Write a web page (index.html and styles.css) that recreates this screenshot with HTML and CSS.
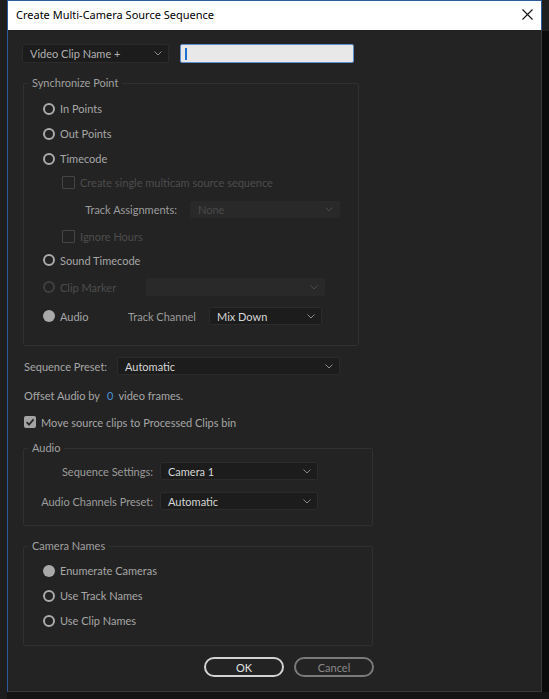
FILE: index.html
```html
<!DOCTYPE html>
<html>
<head>
<meta charset="utf-8">
<link rel="stylesheet" href="styles.css">
</head>
<body>
<div class="screen">
  <div class="left-strip"></div>
  <div class="dialog">
    <div class="titlebar">
      <span class="title">Create Multi-Camera Source Sequence</span>
      <svg class="close" width="11" height="11" viewBox="0 0 11 11"><path d="M0.5 0.5 L10.5 10.5 M10.5 0.5 L0.5 10.5" stroke="#111" stroke-width="1.1" fill="none"/></svg>
    </div>
    <div class="body">
      <div class="top-row">
        <div class="select name-select"><span class="val">Video Clip Name +</span><svg class="chev" width="8" height="5" viewBox="0 0 8 5"><path d="M0.5 0.5 L4 4 L7.5 0.5" stroke="#8a8a8a" fill="none"/></svg></div>
        <div class="text-input"><span class="caret"></span></div>
      </div>

      <fieldset class="group sync">
        <legend>Synchronize Point</legend>
        <div class="options">
          <div class="row h25"><span class="radio"></span><span class="lbl">In Points</span></div>
          <div class="row h25"><span class="radio"></span><span class="lbl">Out Points</span></div>
          <div class="row h25"><span class="radio"></span><span class="lbl">Timecode</span></div>
          <div class="row h23 indent"><span class="check disabled"></span><span class="lbl dim">Create single multicam source sequence</span></div>
          <div class="row h30">
            <span class="lbl assign-lbl">Track Assignments:</span>
            <div class="select disabled-select assign-select"><span class="val dim">None</span><svg class="chev" width="8" height="5" viewBox="0 0 8 5"><path d="M0.5 0.5 L4 4 L7.5 0.5" stroke="#4a4a4a" fill="none"/></svg></div>
          </div>
          <div class="row h24 indent"><span class="check disabled"></span><span class="lbl dim">Ignore Hours</span></div>
          <div class="row h24"><span class="radio"></span><span class="lbl">Sound Timecode</span></div>
          <div class="row h30">
            <span class="radio disabled"></span><span class="lbl dim marker-lbl">Clip Marker</span>
            <div class="select disabled-select marker-select"><span class="val"></span><svg class="chev" width="8" height="5" viewBox="0 0 8 5"><path d="M0.5 0.5 L4 4 L7.5 0.5" stroke="#4a4a4a" fill="none"/></svg></div>
          </div>
          <div class="row h28">
            <span class="radio filled"></span><span class="lbl audio-lbl">Audio</span>
            <span class="lbl channel-lbl">Track Channel</span>
            <div class="select channel-select"><span class="val bright">Mix Down</span><svg class="chev" width="8" height="5" viewBox="0 0 8 5"><path d="M0.5 0.5 L4 4 L7.5 0.5" stroke="#8a8a8a" fill="none"/></svg></div>
          </div>
        </div>
      </fieldset>

      <div class="line preset-row">
        <span class="lbl preset-lbl">Sequence Preset:</span>
        <div class="select preset-select"><span class="val bright">Automatic</span><svg class="chev" width="8" height="5" viewBox="0 0 8 5"><path d="M0.5 0.5 L4 4 L7.5 0.5" stroke="#8a8a8a" fill="none"/></svg></div>
      </div>

      <div class="line offset-row">
        <span class="lbl">Offset Audio by</span><span class="num">0</span><span class="lbl">video frames.</span>
      </div>

      <div class="line move-row">
        <span class="check checked"><svg width="12" height="12" viewBox="0 0 12 12"><path d="M2.6 6.2 L5 8.6 L9.6 3.4" stroke="#2a2a2a" stroke-width="1.8" fill="none"/></svg></span>
        <span class="lbl">Move source clips to Processed Clips bin</span>
      </div>

      <fieldset class="group wide audio-group">
        <legend>Audio</legend>
        <div class="settings">
          <div class="setting">
            <span class="lbl set-lbl">Sequence Settings:</span>
            <div class="select set-select"><span class="val bright">Camera 1</span><svg class="chev" width="8" height="5" viewBox="0 0 8 5"><path d="M0.5 0.5 L4 4 L7.5 0.5" stroke="#8a8a8a" fill="none"/></svg></div>
          </div>
          <div class="setting">
            <span class="lbl set-lbl">Audio Channels Preset:</span>
            <div class="select set-select"><span class="val bright">Automatic</span><svg class="chev" width="8" height="5" viewBox="0 0 8 5"><path d="M0.5 0.5 L4 4 L7.5 0.5" stroke="#8a8a8a" fill="none"/></svg></div>
          </div>
        </div>
      </fieldset>

      <fieldset class="group wide camera-group">
        <legend>Camera Names</legend>
        <div class="options cam-options">
          <div class="row h25"><span class="radio filled"></span><span class="lbl">Enumerate Cameras</span></div>
          <div class="row h25"><span class="radio"></span><span class="lbl">Use Track Names</span></div>
          <div class="row h25"><span class="radio"></span><span class="lbl">Use Clip Names</span></div>
        </div>
      </fieldset>

      <div class="buttons">
        <button class="btn ok">OK</button>
        <button class="btn cancel">Cancel</button>
      </div>
    </div>
  </div>
  <div class="right-strip"></div>
</div>
</body>
</html>
```

FILE: styles.css
```css
* { box-sizing: border-box; }

html, body {
  margin: 0;
  padding: 0;
  background: #141414;
  width: 549px;
  height: 699px;
  overflow: hidden;
}

.screen {
  display: flex;
  align-items: flex-start;
  height: 699px;
}

.left-strip {
  width: 7px;
  height: 699px;
  background: #1d1d1d;
}

.right-strip {
  flex: 1;
  height: 692px;
  background: linear-gradient(#1f1f1f 0, #1f1f1f 31px, #0b0b0b 31px);
}

.dialog {
  width: 535px;
  height: 692px;
  background: #232323;
  border-left: 1px solid #2e5a9c;
  border-right: 1px solid #3a3a3a;
  border-bottom: 1px solid #3a3a3a;
  display: flex;
  flex-direction: column;
  font-family: Lato, "Noto Sans", sans-serif;
  font-size: 11px;
  color: #a6a6a6;
}

.titlebar {
  height: 30px;
  background: #ffffff;
  border-top: 1px solid #2e5a9c;
  margin-right: -1px;
  border-right: 1px solid #2e5a9c;
  display: flex;
  align-items: center;
  justify-content: space-between;
  padding: 0 8px 2px 8px;
}

.title {
  font-family: "Noto Sans", sans-serif;
  font-size: 11px;
  color: #000;
}

.close {
  display: block;
}

.body {
  padding: 14px 0 0 15px;
  display: flex;
  flex-direction: column;
}

.top-row {
  display: flex;
  align-items: center;
  gap: 11px;
  margin-left: -1px;
  height: 19px;
}

.select {
  height: 18px;
  background: #1c1c1c;
  border: 1px solid #2b2b2b;
  border-radius: 2px;
  display: flex;
  align-items: center;
  justify-content: space-between;
  padding: 0 6px 0 7px;
}

.select .val {
  color: #b8b8b8;
  white-space: nowrap;
}

.select .val.bright { color: #d6d6d6; }
.select .val.dim { color: #4a4a4a; }

.chev { display: block; }

.name-select {
  width: 147px;
  height: 19px;
}

.name-select .val { color: #b0b0b0; }

.text-input {
  width: 174px;
  height: 19px;
  background: #e8e8e8;
  border: 1px solid #5b8fd0;
  border-radius: 2px;
  display: flex;
  align-items: center;
  padding-left: 4px;
}

.caret {
  width: 2px;
  height: 12px;
  background: #1f6fd0;
}

.group {
  margin: 0;
  padding: 0;
  border: 1px solid #303030;
  border-radius: 2px;
  min-width: 0;
}

.group legend {
  padding: 0 4px;
  margin-left: 4px;
  line-height: 14px;
  color: #a0a0a0;
}

.sync {
  margin-top: 13px;
  width: 336px;
}

.options {
  padding: 6px 0 15px 19px;
  display: flex;
  flex-direction: column;
}

.row {
  display: flex;
  align-items: center;
}

.h23 { height: 23px; }
.h24 { height: 24px; }
.h25 { height: 25px; }
.h28 { height: 28px; }
.h30 { height: 30px; }

.indent { padding-left: 19px; }

.radio {
  width: 12px;
  height: 12px;
  border: 2px solid #ababab;
  border-radius: 50%;
  margin-right: 5px;
  flex: none;
}

.radio.disabled { border-color: #3f3f3f; }

.radio.filled {
  border: none;
  background: #a9a9a9;
}

.lbl { white-space: nowrap; }
.lbl.dim { color: #4d4d4d; }

.check {
  width: 13px;
  height: 13px;
  border: 1px solid #4a4a4a;
  border-radius: 1px;
  margin-right: 5px;
  flex: none;
}

.check.disabled { border-color: #454545; }

.check.checked {
  width: 12px;
  height: 12px;
  border: none;
  background: #a3a3a3;
  border-radius: 2px;
  display: flex;
}

.check.checked svg { display: block; }

.assign-lbl {
  margin-left: 40px;
  width: 94px;
  text-align: right;
  color: #9c9c9c;
}

.disabled-select {
  background: #292929;
  border-color: #292929;
}

.assign-select {
  margin-left: 13px;
  width: 150px;
  height: 17px;
}

.marker-lbl { width: 86px; }

.marker-select { width: 179px; }

.audio-lbl { width: 68px; }

.channel-lbl { width: 81px; color: #9c9c9c; }

.channel-select { width: 113px; }

.line {
  display: flex;
  align-items: center;
  margin-left: 1px;
  height: 18px;
}

.preset-row { margin-top: 11px; }

.preset-lbl { width: 93px; }

.preset-select { width: 223px; }

.offset-row { margin-top: 11px; }

.num {
  color: #4a90d9;
  margin: 0 5px 0 7px;
}

.move-row { margin-top: 9px; }

.move-row .check { margin-right: 5px; }

.wide { width: 350px; }

.audio-group { margin-top: 10px; }

.settings {
  padding: 7px 0 15px 0;
  display: flex;
  flex-direction: column;
  gap: 12px;
}

.setting {
  display: flex;
  align-items: center;
}

.set-lbl {
  width: 129px;
  text-align: right;
  color: #9c9c9c;
}

.set-select {
  margin-left: 7px;
  width: 158px;
}

.camera-group { margin-top: 13px; }

.cam-options { padding: 5px 0 12px 19px; }

.buttons {
  width: 351px;
  display: flex;
  justify-content: flex-end;
  gap: 10px;
  margin-top: 11px;
}

.btn {
  width: 80px;
  height: 20px;
  border-radius: 10px;
  background: transparent;
  font-family: Lato, "Noto Sans", sans-serif;
  font-size: 11px;
  padding: 0;
}

.btn.ok {
  border: 2px solid #d2d2d2;
  color: #e2e2e2;
}

.btn.cancel {
  border: 2px solid #7a7a7a;
  color: #8a8a8a;
}
```
